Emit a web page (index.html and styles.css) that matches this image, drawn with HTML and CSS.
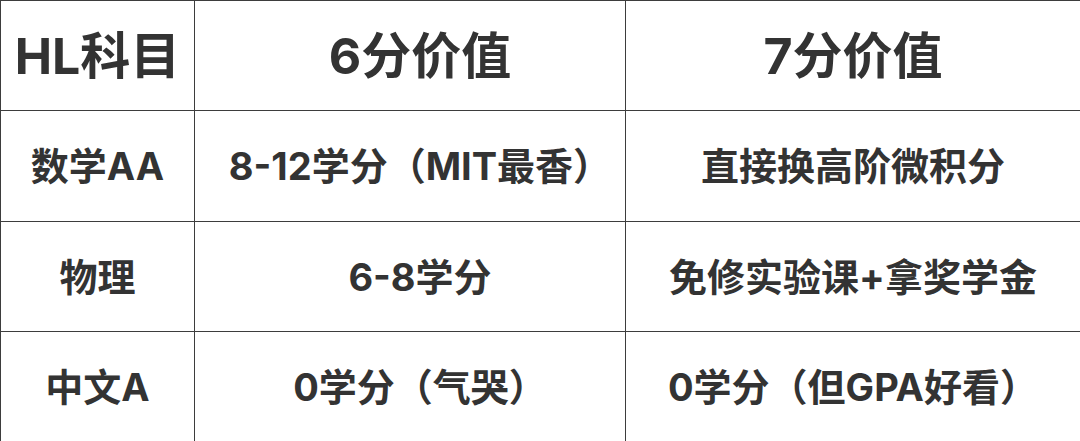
FILE: index.html
```html
<!DOCTYPE html>
<html lang="zh">
<head>
<meta charset="utf-8">
<link rel="stylesheet" href="styles.css">
</head>
<body>
<table class="grid">
  <colgroup>
    <col class="c1"><col class="c2"><col class="c3">
  </colgroup>
  <tr class="head">
    <td>HL科目</td>
    <td class="mid">6分价值</td>
    <td>7分价值</td>
  </tr>
  <tr class="r1">
    <td>数学AA</td>
    <td class="mid">8-12学分（MIT最香）</td>
    <td>直接换高阶微积分</td>
  </tr>
  <tr class="r2">
    <td>物理</td>
    <td class="mid">6-8学分</td>
    <td>免修实验课+拿奖学金</td>
  </tr>
  <tr class="r3">
    <td>中文A</td>
    <td class="mid">0学分（气哭）</td>
    <td>0学分（但GPA好看）</td>
  </tr>
</table>
</body>
</html>
```
FILE: styles.css
```css
html, body {
  margin: 0;
  padding: 0;
  background: #ffffff;
}
.grid {
  width: 1080px;
  height: 441px;
  border-collapse: collapse;
  table-layout: fixed;
  font-family: "Inter", "Noto Sans CJK SC", sans-serif;
  font-weight: 700;
  color: #333333;
}
.c1 { width: 194px; }
.c2 { width: 431px; }
.c3 { width: 455px; }
.grid td {
  border: 1px solid #3d3d3d;
  text-align: center;
  vertical-align: middle;
  padding: 0;
  font-size: 38px;
  line-height: 1;
  white-space: nowrap;
}
.grid td.mid {
  padding-left: 20px;
}
.head td {
  font-size: 50px;
}
.head { height: 110px; }
.r1 { height: 111px; }
.r2 { height: 110px; }
.r3 { height: 110px; }
```
